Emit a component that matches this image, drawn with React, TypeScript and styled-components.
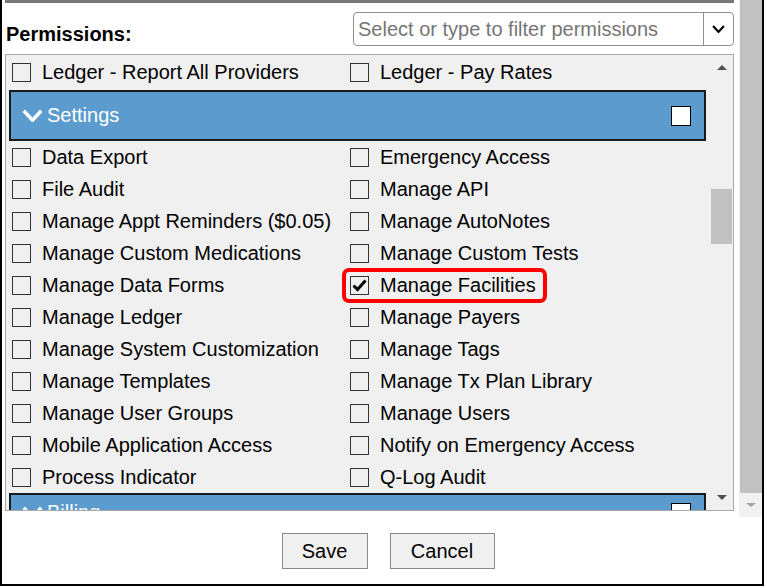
import React from 'react';
import styled, { createGlobalStyle } from 'styled-components';

const GlobalStyle = createGlobalStyle`
  html, body {
    margin: 0;
    padding: 0;
    background: #fff;
  }
  body {
    font-family: "Liberation Sans", Arial, sans-serif;
    color: #000;
  }
  * {
    box-sizing: border-box;
  }
`;

interface Permission {
    name: string;
    checked?: boolean;
    highlight?: boolean;
}

const ledgerRow: Permission[] = [
    { name: 'Ledger - Report All Providers' },
    { name: 'Ledger - Pay Rates' },
];

const settingsLeft: Permission[] = [
    { name: 'Data Export' },
    { name: 'File Audit' },
    { name: 'Manage Appt Reminders ($0.05)' },
    { name: 'Manage Custom Medications' },
    { name: 'Manage Data Forms' },
    { name: 'Manage Ledger' },
    { name: 'Manage System Customization' },
    { name: 'Manage Templates' },
    { name: 'Manage User Groups' },
    { name: 'Mobile Application Access' },
    { name: 'Process Indicator' },
];

const settingsRight: Permission[] = [
    { name: 'Emergency Access' },
    { name: 'Manage API' },
    { name: 'Manage AutoNotes' },
    { name: 'Manage Custom Tests' },
    { name: 'Manage Facilities', checked: true, highlight: true },
    { name: 'Manage Payers' },
    { name: 'Manage Tags' },
    { name: 'Manage Tx Plan Library' },
    { name: 'Manage Users' },
    { name: 'Notify on Emergency Access' },
    { name: 'Q-Log Audit' },
];

const Dialog = styled.div`
  width: 764px;
  border: 2px solid #000;
  border-top: none;
  background: #fff;
`;

const Body = styled.div`
  display: flex;
  height: 517px;
`;

const BodyContent = styled.div`
  flex: 1;
  display: flex;
  flex-direction: column;
  padding: 0 5px 0 3px;
`;

const TopRule = styled.div`
  height: 3px;
  background: #787878;
`;

const FilterRow = styled.div`
  display: flex;
  justify-content: space-between;
  align-items: flex-end;
  margin-top: 9px;
`;

const FieldLabel = styled.label`
  font-size: 20px;
  font-weight: bold;
  line-height: 20px;
  padding-left: 1px;
  margin-bottom: 2px;
`;

const FilterSelect = styled.div`
  display: flex;
  width: 381px;
  height: 34px;
  border: 1px solid #8f8f8f;
  border-radius: 4px;
  background: #fff;
`;

const FilterInput = styled.input`
  flex: 1;
  min-width: 0;
  border: none;
  background: transparent;
  padding: 0 4px;
  font-family: inherit;
  font-size: 20px;
  color: #000;
  outline: none;

  &::placeholder {
    color: #757575;
  }
`;

const ChevronButton = styled.div`
  width: 30px;
  display: flex;
  align-items: center;
  justify-content: center;
  border-left: 1px solid #8f8f8f;
`;

const ListBox = styled.div`
  display: flex;
  height: 457px;
  margin-top: 8px;
  border: 1px solid #a9a9a9;
  background: #f0f0f0;
`;

const Viewport = styled.div`
  flex: 1;
  overflow: hidden;
  padding-top: 1px;
`;

const Row = styled.div`
  display: grid;
  grid-template-columns: 338px 1fr;
  align-items: center;
  height: 32px;
  padding-left: 2px;
`;

const Item = styled.label<{ $highlight?: boolean }>`
  display: inline-flex;
  align-items: center;
  justify-self: start;
  height: 27px;
  padding: 0 7px 0 4px;
  border-radius: 3px;
  font-size: 20px;
  white-space: nowrap;
  outline: ${p => (p.$highlight ? '4px solid #ff0000' : 'none')};
`;

const Box = styled.span`
  display: flex;
  align-items: center;
  justify-content: center;
  flex-shrink: 0;
  width: 19px;
  height: 19px;
  margin-right: 11px;
  border: 1px solid #333;
`;

const SectionHeader = styled.div<{ $gap: number; $height: number }>`
  display: flex;
  align-items: center;
  height: ${p => p.$height}px;
  margin: ${p => p.$gap}px 4px 0 3px;
  padding: 0 12px 0 11px;
  border: 2px solid #1a1a1a;
  background: #5b9bcd;
  color: #fff;
  font-size: 20px;
`;

const HeaderTitle = styled.span`
  margin-left: 4px;
`;

const HeaderBox = styled.span`
  width: 20px;
  height: 20px;
  margin-left: auto;
  margin-right: 1px;
  border: 1px solid #000;
  background: #fff;
`;

const ScrollBar = styled.div<{ $width: number; $bg: string }>`
  display: flex;
  flex-direction: column;
  width: ${p => p.$width}px;
  flex-shrink: 0;
  background: ${p => p.$bg};
`;

const ArrowButton = styled.div<{ $height: number }>`
  display: flex;
  align-items: center;
  justify-content: center;
  height: ${p => p.$height}px;
  flex-shrink: 0;
`;

const Triangle = styled.span<{ $up?: boolean; $color: string; $w: number; $h: number }>`
  width: 0;
  height: 0;
  border-left: ${p => p.$w / 2}px solid transparent;
  border-right: ${p => p.$w / 2}px solid transparent;
  ${p => (p.$up ? 'border-bottom' : 'border-top')}: ${p => p.$h}px solid ${p => p.$color};
`;

const Track = styled.div`
  flex: 1;
`;

const Thumb = styled.div<{ $top: number; $height: number }>`
  margin: ${p => p.$top}px 1px 0;
  height: ${p => p.$height}px;
  background: #c1c1c1;
`;

const PageThumb = styled.div`
  height: 493px;
  margin-left: 1px;
  background: #c1c1c1;
`;

const Footer = styled.div`
  display: flex;
  justify-content: center;
  gap: 22px;
  height: 67px;
  padding: 16px 0 0 12px;
`;

const Button = styled.button<{ $w: number }>`
  width: ${p => p.$w}px;
  height: 36px;
  border: 1px solid #8a8a8a;
  background: #f0f0f0;
  font-family: inherit;
  font-size: 20px;
  color: #000;
  padding: 0;
`;

const Check = () => (
    <svg width="15" height="13" viewBox="0 0 15 13">
        <path d="M1.5 6.5 L5.5 10.5 L13.5 1.5" fill="none" stroke="#000" strokeWidth="3" />
    </svg>
);

const Chevron = ({ size, color, weight }: { size: [number, number]; color: string; weight: number }) => (
    <svg width={size[0]} height={size[1]} viewBox={`0 0 ${size[0]} ${size[1]}`}>
        <polyline
            points={`${weight / 2},${weight / 2} ${size[0] / 2},${size[1] - weight / 2} ${size[0] - weight / 2},${weight / 2}`}
            fill="none"
            stroke={color}
            strokeWidth={weight}
        />
    </svg>
);

const PermissionCell = ({ perm }: { perm: Permission }) => (
    <Item $highlight={perm.highlight}>
        <Box>{perm.checked && <Check />}</Box>
        {perm.name}
    </Item>
);

const Header = ({ title, gap = 2, height = 51 }: { title: string; gap?: number; height?: number }) => (
    <SectionHeader $gap={gap} $height={height}>
        <Chevron size={[21, 13]} color="#fff" weight={3.5} />
        <HeaderTitle>{title}</HeaderTitle>
        <HeaderBox />
    </SectionHeader>
);

export default function App() {
    return (
        <>
            <GlobalStyle />
            <Dialog>
                <Body>
                    <BodyContent>
                        <TopRule />
                        <FilterRow>
                            <FieldLabel>Permissions:</FieldLabel>
                            <FilterSelect>
                                <FilterInput placeholder="Select or type to filter permissions" />
                                <ChevronButton>
                                    <Chevron size={[13, 8]} color="#000" weight={2.2} />
                                </ChevronButton>
                            </FilterSelect>
                        </FilterRow>
                        <ListBox>
                            <Viewport>
                                <Row>
                                    {ledgerRow.map(p => (
                                        <PermissionCell key={p.name} perm={p} />
                                    ))}
                                </Row>
                                <Header title="Settings" />
                                {settingsLeft.map((left, i) => (
                                    <Row key={left.name}>
                                        <PermissionCell perm={left} />
                                        <PermissionCell perm={settingsRight[i]} />
                                    </Row>
                                ))}
                                <Header title="Billing" gap={0} height={39} />
                            </Viewport>
                            <ScrollBar $width={23} $bg="#f0f0f0">
                                <ArrowButton $height={25}>
                                    <Triangle $up $color="#505050" $w={10} $h={5} />
                                </ArrowButton>
                                <Track>
                                    <Thumb $top={109} $height={55} />
                                </Track>
                                <ArrowButton $height={25}>
                                    <Triangle $color="#505050" $w={10} $h={5} />
                                </ArrowButton>
                            </ScrollBar>
                        </ListBox>
                    </BodyContent>
                    <ScrollBar $width={23} $bg="#f1f1f1">
                        <PageThumb />
                        <ArrowButton $height={24}>
                            <Triangle $color="#a3a3a3" $w={11} $h={4} />
                        </ArrowButton>
                    </ScrollBar>
                </Body>
                <Footer>
                    <Button $w={86}>Save</Button>
                    <Button $w={105}>Cancel</Button>
                </Footer>
            </Dialog>
        </>
    );
}
